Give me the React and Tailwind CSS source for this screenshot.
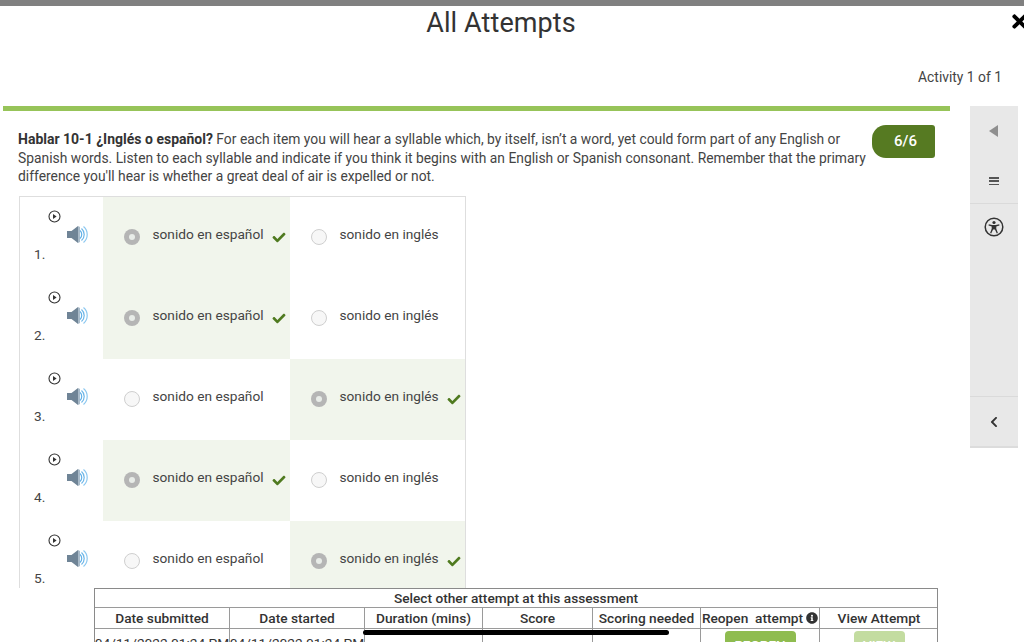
import React from "react";
import { FaTimes, FaCheck, FaInfoCircle, FaChevronLeft } from "react-icons/fa";

const PlayIcon = () => (
  <svg width="13" height="13" viewBox="0 0 13 13" className="block">
    <circle cx="6.5" cy="6.5" r="5.5" fill="none" stroke="#333" strokeWidth="1.1" />
    <path d="M5 4l3.6 2.5L5 9z" fill="#333" />
  </svg>
);

const Speaker = () => (
  <svg width="21" height="19" viewBox="0 0 21 19" className="block">
    <path d="M0 6h4.5L11 1v17l-6.500-5H0z" fill="#6f8496" />
    <path d="M11 1l2 1v15l-2 1z" fill="#a9bac8" />
    <path d="M13 5.500a5.500 5.500 0 0 1 0 8" fill="none" stroke="#5fb0e8" strokeWidth="1.200" />
    <path d="M14.500 3.500a8 8 0 0 1 0 12" fill="none" stroke="#6db6e8" strokeWidth="1.200" />
    <path d="M16.500 1.500a10.500 10.500 0 0 1 0 16" fill="none" stroke="#8cc8f0" strokeWidth="1.200" />
  </svg>
);

const Radio = ({ on }) =>
  on ? (
    <span className="block w-[16px] h-[16px] rounded-full bg-[#b5b5b5] flex items-center justify-center shrink-0">
      <span className="block w-[6px] h-[6px] rounded-full bg-[#e8ece8]" />
    </span>
  ) : (
    <span className="block w-[16px] h-[16px] rounded-full bg-[#f7f7f7] border border-[#cfcfcf] shrink-0" />
  );

const Option = ({ label, picked, width }) => (
  <div className={`${width} h-[81px] relative shrink-0 ${picked ? "bg-[#f1f5ec]" : "bg-white"}`}>
    <div className="flex items-start pl-[21px] pt-[27px]">
      <div className="pt-[5px]">
        <Radio on={picked} />
      </div>
      <span className="ml-[12.5px] text-[13.7px] leading-[20px] text-[#444] whitespace-nowrap">{label}</span>
      {picked && <FaCheck className="ml-[8px] mt-[7px] text-[#4f7a1f] w-[14px] h-[13px]" />}
    </div>
  </div>
);

const rows = [
  ["1.", 0],
  ["2.", 0],
  ["3.", 1],
  ["4.", 0],
  ["5.", 1],
];

const Row = ({ n, correct }) => (
  <div className="flex">
    <div className="w-[83px] h-[81px] shrink-0 pt-[13px]">
      <div className="pl-[28px]">
        <PlayIcon />
      </div>
      <div className="pl-[47px] mt-[2px]">
        <Speaker />
      </div>
      <div className="pl-[14px] text-[13.7px] leading-[16px] text-[#444] mt-[2px]">{n}</div>
    </div>
    <Option label="sonido en español" picked={correct === 0} width="w-[187px]" />
    <Option label="sonido en inglés" picked={correct === 1} width="w-[175px]" />
  </div>
);

const Th = ({ children, className = "" }) => (
  <div className={`flex items-center justify-center h-[20px] text-[13.7px] font-medium text-[#333] whitespace-nowrap border-r border-[#9a9a9a] last:border-r-0 ${className}`}>
    {children}
  </div>
);

const Td = ({ children, className = "" }) => (
  <div className={`flex justify-center h-[14px] text-[13.7px] leading-[16px] text-[#333] whitespace-nowrap border-r border-[#9a9a9a] last:border-r-0 overflow-hidden ${className}`}>
    {children}
  </div>
);

const cols = "grid grid-cols-[135px_135px_118px_110px_108px_119px_118px]";

export default function App() {
  return (
    <div className="relative w-[1024px] h-[642px] overflow-hidden bg-white text-[#333] font-['Roboto',sans-serif]">
      <div className="h-[6px] bg-[#808080]" />
      <div className="relative h-[100px]">
        <h1 className="pl-[2px] pt-[1px] text-center text-[27px] leading-[32px] text-[#333] font-normal tracking-[0.1px] w-[1000px]">All Attempts</h1>
        <FaTimes className="absolute left-[1009px] top-[5px] w-[21px] h-[21px] text-black" />
        <div className="mt-[29px] mr-[22px] text-right text-[13.85px] leading-[18px] text-[#444]">Activity 1 of 1</div>
      </div>

      <div className="flex items-start pl-[3px]">
        <div className="w-[947px] shrink-0">
          <div className="h-[5px] bg-[#97c459]" />
          <div className="flex items-start pl-[15px] pr-[15px] pt-[14px]">
            <p className="w-[851px] shrink-0 pt-[5px] text-[13.85px] leading-[18.5px] text-[#444]">
              <strong className="font-bold text-[14px] text-[#333]">Hablar 10-1 ¿Inglés o español?</strong> For each item you will hear a syllable which, by itself, isn’t a word, yet could form part of any English or Spanish words. Listen to each syllable and indicate if you think it begins with an English or Spanish consonant. Remember that the primary difference you'll hear is whether a great deal of air is expelled or not.
            </p>
            <div className="ml-[3px] w-[63px] h-[33px] bg-[#567a22] rounded-l-[14px] rounded-r-[3px] flex items-center justify-center pl-[4px] text-white text-[15px] font-medium">6/6</div>
          </div>
          <div className="ml-[16px] mt-[10.5px] w-[447px] h-[392px] border-t border-l border-r border-[#dedede] overflow-hidden">
            {rows.map(([n, c]) => (
              <Row key={n} n={n} correct={c} />
            ))}
          </div>
          <div className="ml-[91px] w-[844px] border border-[#8a8a8a] bg-white">
            <div className="h-[19px] flex items-center justify-center text-[13.7px] font-medium text-[#333] border-b border-[#9a9a9a]">Select other attempt at this assessment</div>
            <div className={`${cols} border-b border-[#9a9a9a]`}>
              <Th>Date submitted</Th>
              <Th>Date started</Th>
              <Th>Duration (mins)</Th>
              <Th>Score</Th>
              <Th>Scoring needed</Th>
              <Th>
                Reopen&nbsp; attempt <FaInfoCircle className="ml-[3px] w-[12px] h-[12px] text-[#333]" />
              </Th>
              <Th>View Attempt</Th>
            </div>
            <div className={cols}>
              <Td className="pt-[6px]">04/11/2022 01:24 PM</Td>
              <Td className="pt-[6px]">04/11/2022 01:24 PM</Td>
              <Td className="pt-[9px]">1</Td>
              <Td className="pt-[9px]">6</Td>
              <Td />
              <Td className="pt-[2px]">
                <span className="block w-[71px] h-[24px] bg-[#8fbc50] rounded-[4px] text-white text-center text-[13.5px] leading-[28px] font-medium">REOPEN</span>
              </Td>
              <Td className="pt-[2px]">
                <span className="block w-[51px] h-[24px] bg-[#c3dca0] rounded-[4px] text-white text-center text-[13.5px] leading-[28px] font-medium">VIEW</span>
              </Td>
            </div>
          </div>
        </div>

        <aside className="ml-[20px] w-[48px] h-[342px] bg-[#e8e8e8] border-b-2 border-[#dcdcdc] flex flex-col">
          <div className="h-[98px] border-b border-[#dadada] flex flex-col items-center">
            <svg width="10" height="12" viewBox="0 0 10 12" className="mt-[19px] block">
              <path d="M9 0v12L0 6z" fill="#8f8f8f" />
            </svg>
            <div className="mt-[40px] w-[10px] h-[8px] flex flex-col justify-between">
              <span className="block h-[1.500px] bg-[#555]" />
              <span className="block h-[1.500px] bg-[#555]" />
              <span className="block h-[1.500px] bg-[#555]" />
            </div>
          </div>
          <div className="h-[193px] border-b border-[#dadada] flex justify-center pt-[13px]">
            <svg width="20" height="20" viewBox="0 0 20 20" className="block">
              <circle cx="10" cy="10" r="8.800" fill="none" stroke="#333" strokeWidth="1.500" />
              <circle cx="10" cy="5.500" r="1.600" fill="#333" />
              <path d="M4.800 7.300l3.400.8h3.600l3.400-.8.300 1.200-3.200.9v2.400l1.600 4.300-1.100.4L10.900 12.500h-1.800L7.200 16.500l-1.100-.4 1.600-4.300V9.400l-3.200-.9z" fill="#333" />
            </svg>
          </div>
          <div className="flex-1 flex justify-center pt-[19px]">
            <FaChevronLeft className="w-[12px] h-[12px] text-[#333]" />
          </div>
        </aside>
      </div>

      <div className="absolute left-[363px] top-[630px] w-[306px] h-[5px] rounded-full bg-black" />
    </div>
  );
}
